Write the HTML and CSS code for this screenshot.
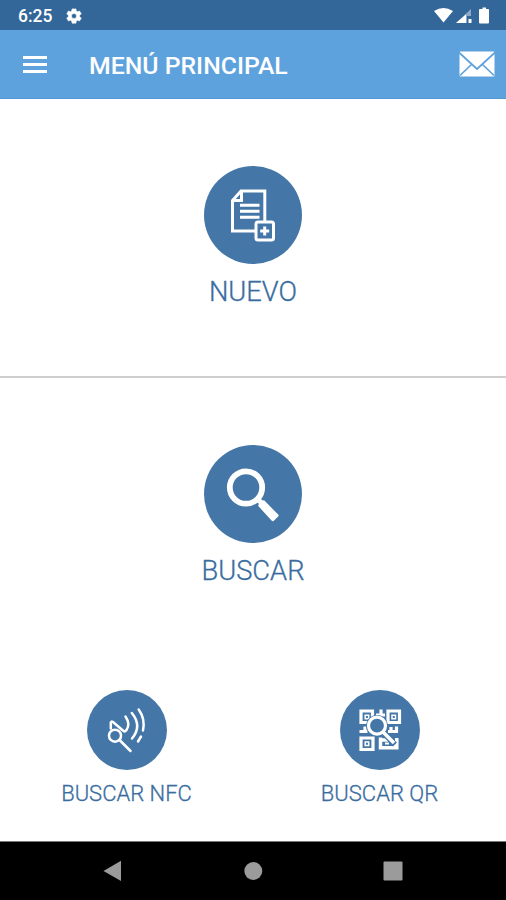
FILE: index.html
```
<!DOCTYPE html>
<html lang="es">
<head>
    <meta charset="UTF-8">
    <meta name="viewport" content="width=device-width, initial-scale=1.0">
    <title>Menú principal</title>
    <link rel="stylesheet" href="styles.css">
</head>
<body>
    <div class="screen">
        <div class="status-bar">
            <span class="clock">6:25</span>
            <svg class="gear" width="18" height="18" viewBox="0 0 24 24">
                <path fill="#fff" stroke="#fff" stroke-width=".8" stroke-linejoin="round" fill-rule="evenodd" d="M19.400 13a7.500 7.500 0 0 0 0-2l2.300-1.700-2.300-4-2.700 1.100a8 8 0 0 0-1.700-1L14.600 2.500H9.400L9 5.400a8 8 0 0 0-1.700 1L4.600 5.300l-2.300 4L4.600 11a7.500 7.500 0 0 0 0 2l-2.300 1.700 2.300 4 2.700-1.100a8 8 0 0 0 1.700 1l.4 2.900h5.200l.4-2.900a8 8 0 0 0 1.700-1l2.700 1.100 2.300-4zM12 15.400a3.400 3.400 0 1 1 0-6.800 3.400 3.400 0 0 1 0 6.800z"/>
            </svg>
            <svg class="signals" width="60" height="20" viewBox="0 0 60 20">
                <path fill="#fff" d="M1 5Q10.500-1 20 5L10.500 16.500z"/>
                <path fill="#8dabc9" d="M38 3v7h-4v7H23z"/>
                <path fill="#fff" d="M33 8.500V17H23zM35.500 13h3v4h-3z"/>
                <path fill="#fff" d="M47 3h2.500V1.500h3.500V3h2.500q.5 0 .5 1v12.500q0 1-1 1h-8q-1 0-1-1V4q0-1 1-1z"/>
            </svg>
        </div>

        <header class="toolbar">
            <button class="menu-button" aria-label="Menú">
                <span></span>
                <span></span>
                <span></span>
            </button>
            <h1>MENÚ PRINCIPAL</h1>
            <svg class="mail" width="36" height="26" viewBox="0 0 36 26">
                <rect x=".5" y=".5" width="35" height="25" rx="1" fill="#fff"/>
                <path d="M0 1.500L18 18 36 1.500M1 24.500L13 13M35 24.500L23 13" fill="none" stroke="#5ea2dd" stroke-width="1.700"/>
            </svg>
        </header>

        <main>
            <section class="panel panel-new">
                <a class="option">
                    <svg class="circle" viewBox="0 0 98 98">
                        <g fill="none" stroke="#fff" stroke-width="3">
                            <path d="M51 65H28.500V34.500l8.500-9.500h23.800V56"/>
                            <path d="M29 34.500h8.500V25" stroke-width="3"/>
                            <path d="M36 39.300h19.500M36 45.300h19.500M36 51.300h19.500"/>
                            <rect x="52" y="56" width="17.500" height="18" rx="2"/>
                            <path d="M60.700 60.500v9M56.200 65h9"/>
                        </g>
                    </svg>
                    <span>NUEVO</span>
                </a>
            </section>

            <section class="panel panel-search">
                <a class="option">
                    <svg class="circle" viewBox="0 0 98 98">
                        <circle cx="42" cy="42.500" r="16.200" fill="none" stroke="#fff" stroke-width="5.800"/>
                        <path d="M53 53.500l8 8" stroke="#fff" stroke-width="5"/>
                        <path d="M59.500 56.500L73.300 70.500 68.700 75 55.500 60.500z" fill="#fff" stroke="#fff" stroke-width="2.500" stroke-linejoin="round"/>
                    </svg>
                    <span>BUSCAR</span>
                </a>
            </section>

            <section class="small-options">
                <a class="option small">
                    <svg class="circle" viewBox="0 0 80 80">
                        <g fill="none" stroke="#fff" stroke-width="2.500" stroke-linecap="round" stroke-linejoin="round">
                            <circle cx="28" cy="45.700" r="6"/>
                            <path d="M32.500 50L43.500 61"/>
                            <path d="M23.800 38.500V32.500Q24 31 26 32L36.500 41Q38 42 39.500 40Q43.500 34 38.500 26.500"/>
                            <path d="M44.800 23Q55.500 36 45 48.500"/>
                            <path d="M51.700 19.500Q58.500 29 56 40.500"/>
                            <path d="M54 46.500L51 51.500"/>
                        </g>
                    </svg>
                    <span>BUSCAR NFC</span>
                </a>
                <a class="option small">
                    <svg class="circle" viewBox="0 0 80 80">
                        <g fill="none" stroke="#fff" stroke-width="3.200">
                            <path d="M21 21h11.500v11.500H21zM48 21h11.500v11.500H48zM21 48h12v11.500H21z"/>
                            <path d="M25.200 25.200h3.500v3.500h-3.500zM52 25.200h3.500v3.500H52zM25.200 52h3.500v3.500h-3.500z" stroke-width="1.500"/>
                            <path d="M41 19.500V26M36 25h9M19.500 41.500h8M25 36.500v5M48 41.500h10M51 37v5M56.500 36.500v6"/>
                            <path d="M40.500 47.500v10.300h16.300V48M42 50h6" stroke-width="3.500"/>
                            <path d="M45 53.500h4M53 55h4" stroke-width="2"/>
                        </g>
                        <circle cx="37" cy="35.700" r="10.800" fill="#4477a7"/>
                        <path d="M43.500 43L55 54.500" stroke="#4477a7" stroke-width="5.500"/>
                        <circle cx="37" cy="35.700" r="8.500" fill="none" stroke="#fff" stroke-width="3.200"/>
                        <path d="M43 42L54 53" stroke="#fff" stroke-width="3.600"/>
                    </svg>
                    <span>BUSCAR QR</span>
                </a>
            </section>
        </main>

        <nav class="nav-bar">
            <svg width="20" height="22" viewBox="0 0 20 22"><path d="M18 .8V21L.5 11z" fill="#9b9b9b"/></svg>
            <svg width="20" height="22" viewBox="0 0 20 22"><circle cx="10.300" cy="11" r="9" fill="#9b9b9b"/></svg>
            <svg width="20" height="22" viewBox="0 0 20 22"><rect x=".5" y="1.500" width="19" height="19" rx="1" fill="#9b9b9b"/></svg>
        </nav>
    </div>
</body>
</html>
```
FILE: styles.css
```
body {
    margin: 0;
    font-family: Roboto, sans-serif;
    background-color: #ffffff;
}

.screen {
    display: flex;
    flex-direction: column;
    width: 506px;
    height: 900px;
    overflow: hidden;
}

.status-bar {
    display: flex;
    align-items: center;
    box-sizing: border-box;
    height: 30px;
    padding: 1px 13px 0 18px;
    background-color: #336699;
    color: #ffffff;
}

.clock {
    width: 34px;
    font-size: 17.5px;
    font-weight: 500;
    line-height: 20px;
}

.gear {
    margin-left: 13px;
}

.signals {
    margin-left: auto;
}

.toolbar {
    display: flex;
    align-items: center;
    box-sizing: border-box;
    height: 69px;
    padding: 0 11px 0 23px;
    background-color: #5ea2dd;
    border-bottom: 1px solid #5598d3;
    color: #ffffff;
}

.toolbar h1 {
    margin: 3px 0 0 42px;
    font-size: 24.8px;
    font-weight: 500;
    line-height: 30px;
}

.menu-button {
    display: flex;
    flex-direction: column;
    gap: 4px;
    width: 24px;
    margin-top: 1px;
    padding: 0;
    background: none;
    border: none;
}

.menu-button span {
    height: 3px;
    background-color: #ffffff;
}

.mail {
    margin-left: auto;
}

main {
    flex: 1;
    display: flex;
    flex-direction: column;
}

.panel {
    display: flex;
    justify-content: center;
    box-sizing: border-box;
    padding-top: 67px;
}

.panel-new {
    height: 279px;
    border-bottom: 2px solid #cfcfcf;
}

.panel-search {
    height: 312px;
}

.option {
    display: flex;
    flex-direction: column;
    align-items: center;
    color: #3a6d9f;
    font-size: 27.3px;
    font-weight: 300;
    line-height: 32px;
    -webkit-text-stroke: 0.3px #3a6d9f; /* Slightly heavier than light */
}

.option span {
    margin-top: 12px;
}

.circle {
    width: 98px;
    height: 98px;
    border-radius: 50%;
    background-color: #4477a7;
}

.small-options {
    display: grid;
    grid-template-columns: 1fr 1fr;
}

.small {
    font-size: 22px;
    line-height: 26px;
}

.small span {
    margin-top: 11px;
}

.small .circle {
    width: 80px;
    height: 80px;
}

.nav-bar {
    display: flex;
    align-items: center;
    justify-content: space-between;
    box-sizing: border-box;
    height: 59px;
    padding: 0 103px;
    background-color: #000000;
    border-top: 1px solid #777777;
}
```
